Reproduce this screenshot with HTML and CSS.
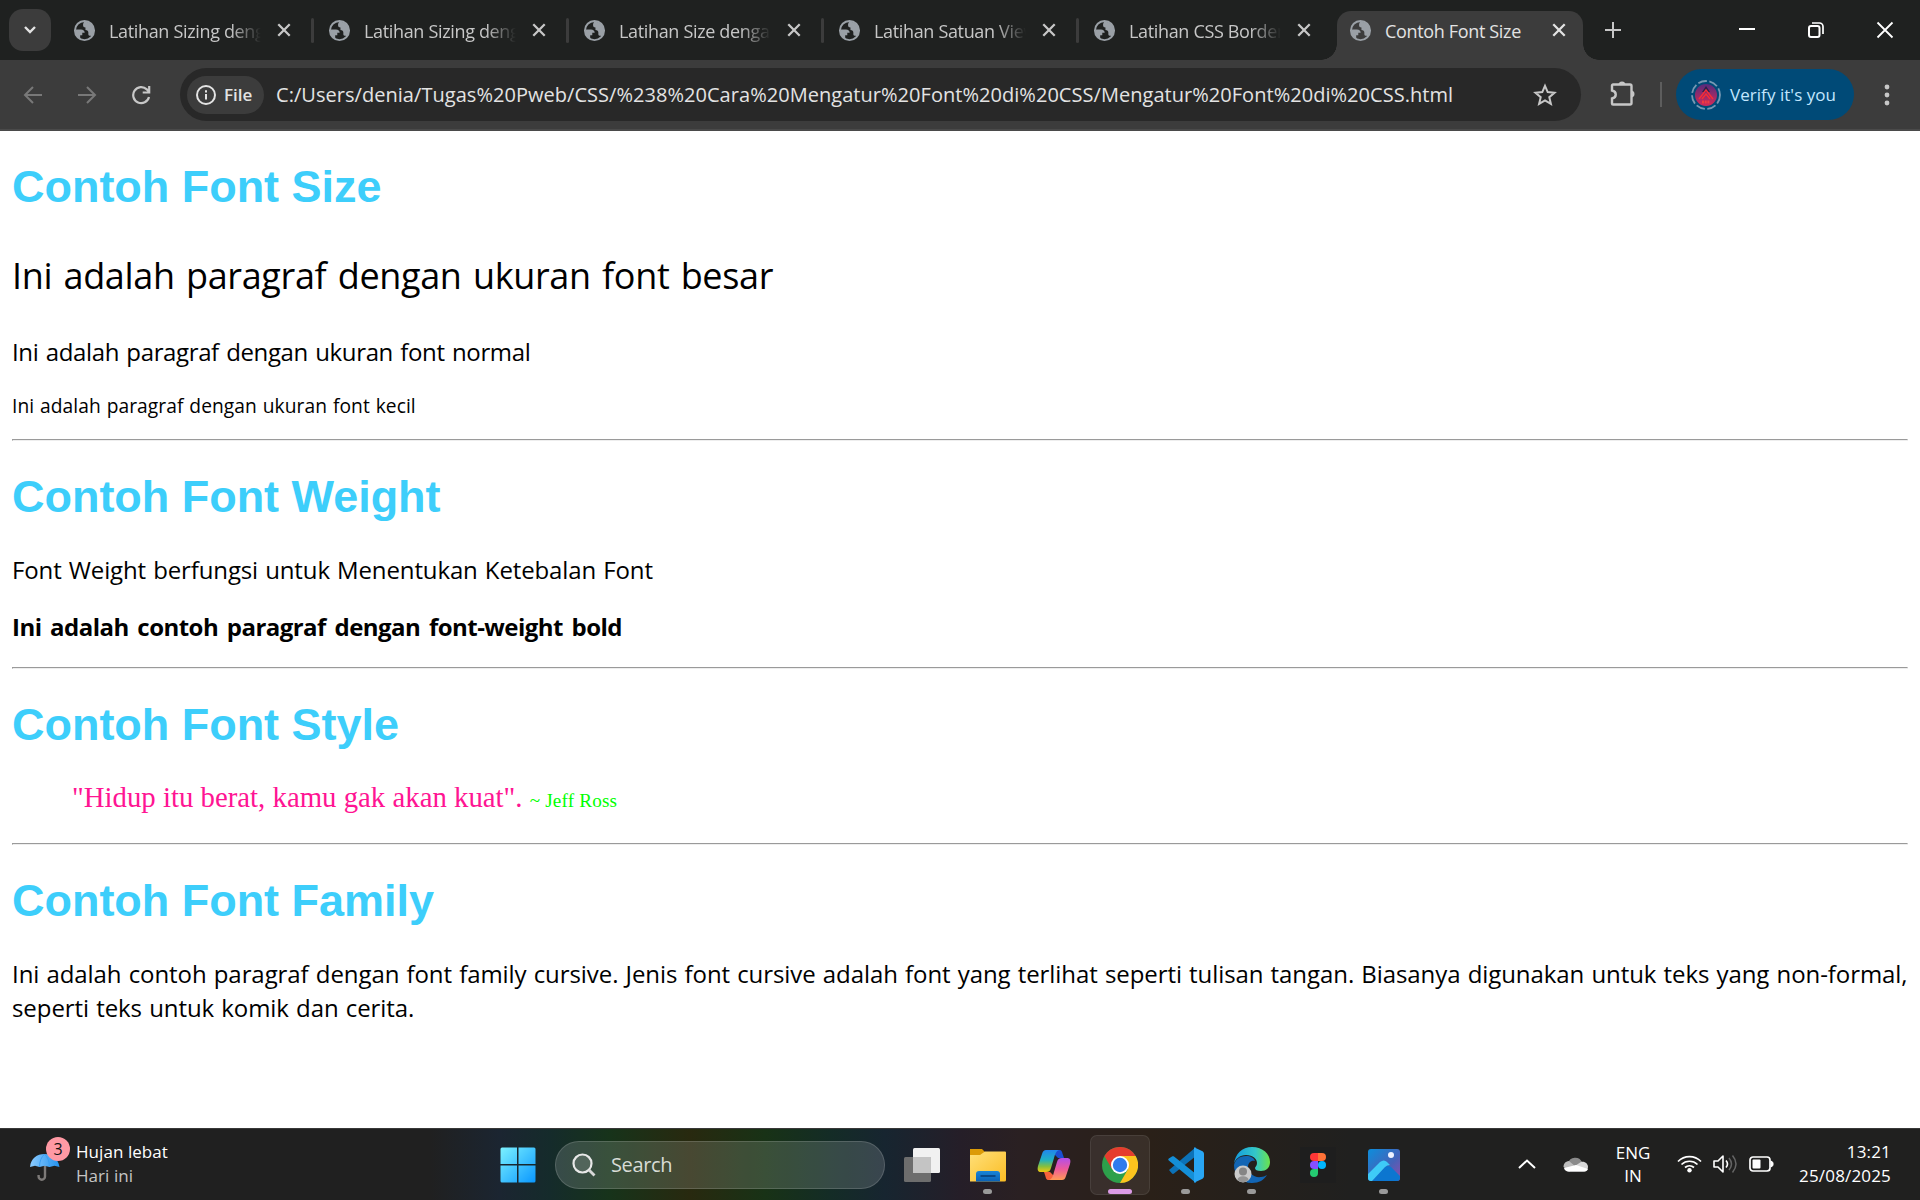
FILE: index.html
```html
<!DOCTYPE html>
<html lang="id">
<head>
<meta charset="utf-8">
<title>Contoh Font Size</title>
<link rel="stylesheet" href="styles.css">
</head>
<body>
<svg class="defs" width="0" height="0">
  <defs>
    <symbol id="globe" viewBox="0 0 24 24">
      <circle cx="12" cy="12" r="10" fill="none" stroke="#9aa0a6" stroke-width="2"/>
      <path fill="#9aa0a6" d="M12 2.500C10.600 4 10.500 5 10.500 6.500c0 1.500 1 2.300 2.500 2.300v2.700c2 0 3 1 3 2.500v1.800c0 1.200 1 1.700 2.300 1.700l1.700.5C21 16 22 14 22 12A10 10 0 0 0 12 2.500zM2.500 11h5.800c2.500 0 3.900 1.400 3.900 3.400h-2.500v2.500H7.500v3.700C4 18.500 2 15.500 2.500 11z"/>
    </symbol>
    <symbol id="close" viewBox="0 0 14 14"><path d="M2 2l10 10M12 2L2 12" stroke="currentColor" stroke-width="2" fill="none"/></symbol>
  </defs>
</svg>
<div class="screen">
  <header class="tabstrip">
    <div class="tab-search"><svg width="14" height="10" viewBox="0 0 14 10"><path d="M2 2l5 5 5-5" fill="none" stroke="#e3e3e3" stroke-width="2.400"/></svg></div>
    <div class="tab"><svg class="fav"><use href="#globe"/></svg><span class="tab-title">Latihan Sizing dengan</span><svg class="x"><use href="#close"/></svg></div>
    <div class="tab"><svg class="fav"><use href="#globe"/></svg><span class="tab-title">Latihan Sizing dengan</span><svg class="x"><use href="#close"/></svg></div>
    <div class="tab"><svg class="fav"><use href="#globe"/></svg><span class="tab-title">Latihan Size dengan</span><svg class="x"><use href="#close"/></svg></div>
    <div class="tab"><svg class="fav"><use href="#globe"/></svg><span class="tab-title">Latihan Satuan Viewport</span><svg class="x"><use href="#close"/></svg></div>
    <div class="tab last"><svg class="fav"><use href="#globe"/></svg><span class="tab-title">Latihan CSS Border</span><svg class="x"><use href="#close"/></svg></div>
    <div class="tab active"><svg class="fav"><use href="#globe"/></svg><span class="tab-title">Contoh Font Size</span><svg class="x"><use href="#close"/></svg></div>
    <svg class="newtab" viewBox="0 0 16 16"><path d="M8 0v16M0 8h16" stroke="#c7c7c7" stroke-width="2"/></svg>
    <div class="winctl">
      <svg viewBox="0 0 18 18"><path d="M1 8h16" stroke="#fff" stroke-width="2"/></svg>
      <svg viewBox="0 0 18 18"><rect x="2" y="5" width="10.500" height="11" rx="2" fill="none" stroke="#fff" stroke-width="2"/><path d="M5 2h7.500a3.500 3.500 0 0 1 3.500 3.500V13" fill="none" stroke="#fff" stroke-width="1.700"/></svg>
      <svg viewBox="0 0 18 18"><path d="M1.500 1.500l15 15M16.500 1.500l-15 15" stroke="#fff" stroke-width="1.800"/></svg>
    </div>
  </header>
  <div class="toolbar">
    <svg class="nav dim" viewBox="0 0 20 20"><path d="M19 10H2M10 2l-8 8 8 8" fill="none" stroke="currentColor" stroke-width="2"/></svg>
    <svg class="nav dim" viewBox="0 0 20 20"><path d="M1 10h17M10 2l8 8-8 8" fill="none" stroke="currentColor" stroke-width="2"/></svg>
    <svg class="nav" viewBox="0 0 20 20"><path d="M18 12a8 8 0 1 1-2.200-7.600L18 6.500M18.200 1v6.500h-6.500" fill="none" stroke="currentColor" stroke-width="2.200"/></svg>
    <div class="omnibox">
      <div class="chip"><svg width="20" height="20" viewBox="0 0 20 20"><circle cx="10" cy="10" r="9" fill="none" stroke="#e3e3e3" stroke-width="2"/><path d="M10 9v5.500M10 5.200v2.200" stroke="#e3e3e3" stroke-width="2"/></svg><span>File</span></div>
      <span class="url">C:/Users/denia/Tugas%20Pweb/CSS/%238%20Cara%20Mengatur%20Font%20di%20CSS/Mengatur%20Font%20di%20CSS.html</span>
      <svg class="star" viewBox="0 0 24 24"><path d="M12 2.800l2.700 6.300 6.800.6-5.200 4.500 1.600 6.700-5.900-3.600-5.900 3.600 1.600-6.700-5.200-4.500 6.800-.6z" fill="none" stroke="#c7c7c7" stroke-width="2"/></svg>
    </div>
    <svg class="ext" viewBox="0 0 26 26"><path d="M3 4.500h17a1.500 1.500 0 0 1 1.500 1.500v17a1.500 1.500 0 0 1-1.500 1.500H3a1 1 0 0 1-1-1v-5c5-1 5-7 0-8V5.500a1 1 0 0 1 1-1z" fill="none" stroke="#c7c7c7" stroke-width="2.400"/><path d="M8.500 5a3.500 3.500 0 0 1 7 0zM21 10.500a3.500 3.500 0 0 1 0 7z" fill="#c7c7c7"/></svg>
    <i class="divider"></i>
    <div class="verify">
      <svg width="30" height="30" viewBox="0 0 30 30"><defs><linearGradient id="av" x1="0" y1="0" x2="0" y2="1"><stop offset="0" stop-color="#552b7c"/><stop offset="1" stop-color="#d42a58"/></linearGradient></defs><circle cx="15" cy="15" r="14" fill="none" stroke="#7799b4" stroke-width="1.800" stroke-dasharray="9 2.500"/><circle cx="15" cy="15" r="11" fill="url(#av)"/><path d="M15 6l-4 6h8z" fill="#29204d"/><path d="M8 19l7-9 7 9M11 19l4-5 4 5" fill="none" stroke="#f52c37" stroke-width="1.500"/><path d="M11 22h8" stroke="#f03b41" stroke-width="3" stroke-dasharray="2 .7"/></svg>
      <span>Verify it's you</span>
    </div>
    <svg class="dots" viewBox="0 0 6 22"><g fill="#c7c7c7"><circle cx="3" cy="3" r="2.400"/><circle cx="3" cy="11" r="2.400"/><circle cx="3" cy="19" r="2.400"/></g></svg>
  </div>
  <main class="page">
    <h1>Contoh Font Size</h1>
    <p class="big">Ini adalah paragraf dengan ukuran font besar</p>
    <p class="normal">Ini adalah paragraf dengan ukuran font normal</p>
    <p class="small">Ini adalah paragraf dengan ukuran font kecil</p>
    <hr class="first">
    <h1>Contoh Font Weight</h1>
    <p class="weight">Font Weight berfungsi untuk Menentukan Ketebalan Font</p>
    <p class="bold">Ini adalah contoh paragraf dengan font-weight bold</p>
    <hr>
    <h1>Contoh Font Style</h1>
    <blockquote>"Hidup itu berat, kamu gak akan kuat". <span class="author">~ Jeff Ross</span></blockquote>
    <hr>
    <h1>Contoh Font Family</h1>
    <p class="family">Ini adalah contoh paragraf dengan font family cursive. Jenis font cursive adalah font yang terlihat seperti tulisan tangan. Biasanya digunakan untuk teks yang non-formal,<br>seperti teks untuk komik dan cerita.</p>
  </main>
  <footer class="taskbar">
    <div class="weather">
      <div class="umbrella"><svg width="30" height="30" viewBox="0 0 30 30"><defs><linearGradient id="um"><stop offset="0" stop-color="#8bcbff"/><stop offset="1" stop-color="#2392ee"/></linearGradient></defs><path d="M15 13v11.500a3.200 3.200 0 0 1-6.400 0V23" fill="none" stroke="#7d7a78" stroke-width="2.400"/><path d="M0 15C1 6 7 2 14.500 2S28 6 29.500 15l-5-1.200-5 1.200-5-1.200-5 1.200-4.500-1.200z" fill="url(#um)"/><path d="M9.500 15c0-6 2-10 5-13M19.500 15c0-6-2-10-5-13" stroke="#3b9ff2" fill="none"/></svg><b class="badge">3</b></div>
      <div class="wtext"><span>Hujan lebat</span><span class="sub">Hari ini</span></div>
    </div>
    <div class="center">
      <div class="slot"><svg width="36" height="36" viewBox="0 0 36 36"><defs><linearGradient id="win" gradientUnits="userSpaceOnUse" x1="0" y1="0" x2="36" y2="36"><stop offset="0" stop-color="#7df3ff"/><stop offset="1" stop-color="#0896ff"/></linearGradient></defs><path fill="url(#win)" d="M2 .500h15v16.500H.5V2A1.500 1.500 0 0 1 2 .5zM18.500.5H34A1.500 1.500 0 0 1 35.500 2v15h-17zM.5 18.500H17v17H2A1.500 1.500 0 0 1 .5 34zM18.500 18.500h17V34a1.500 1.500 0 0 1-1.500 1.500H18.500z"/></svg></div>
      <div class="search"><svg width="24" height="24" viewBox="0 0 24 24"><circle cx="10.500" cy="10.500" r="9" fill="#ffffff22" stroke="#e8e8e8" stroke-width="2.200"/><path d="M17 17l5.500 5.500" stroke="#d8d8d8" stroke-width="2.800"/></svg><span>Search</span></div>
      <div class="slot"><svg width="36" height="36" viewBox="0 0 36 36"><rect x="0" y="10" width="27" height="25" rx="1.500" fill="#6d6d6d"/><rect x="9" y="1" width="27" height="25" rx="1.500" fill="#f1f1f1"/><path d="M9 10h18v16H9z" fill="#c4c4c4"/></svg></div>
      <div class="slot run"><svg width="36" height="36" viewBox="0 0 36 36"><defs><linearGradient id="fo" x1="0" y1="0" x2="1" y2="1"><stop offset="0" stop-color="#ffe07a"/><stop offset="1" stop-color="#fbbd24"/></linearGradient><linearGradient id="fb" x1="0" y1="0" x2="0" y2="1"><stop offset="0" stop-color="#1985d8"/><stop offset="1" stop-color="#0a61b5"/></linearGradient></defs><path d="M0 2h12l3 3-3 4H0z" fill="#dc9b08"/><path d="M0 8h10l5-3.500h20A1 1 0 0 1 36 5.500V33a1.500 1.500 0 0 1-1.500 1.500H0z" fill="url(#fo)"/><path d="M6 34.500V27a3 3 0 0 1 3-3h18a3 3 0 0 1 3 3v7.500z" fill="url(#fb)"/><path d="M10.500 29h15" stroke="#083f78" stroke-width="1.600"/></svg></div>
      <div class="slot"><svg width="36" height="36" viewBox="0 0 36 36"><defs><linearGradient id="c1" x1="0" y1="0" x2="0" y2="1"><stop offset="0" stop-color="#2185ee"/><stop offset=".45" stop-color="#1fb1c2"/><stop offset=".75" stop-color="#87bf3e"/><stop offset="1" stop-color="#f3c70e"/></linearGradient><linearGradient id="c2" x1="0" y1="0" x2="0" y2="1"><stop offset="0" stop-color="#b34eea"/><stop offset=".5" stop-color="#ed599b"/><stop offset="1" stop-color="#ff9b55"/></linearGradient></defs><path d="M14 3h9c3 0 3 2 4 5l1 3h-6z" fill="#1b4fd2"/><path d="M22 33h-9c-3 0-3-2-4-5l-1-3h6z" fill="#f7623b"/><path d="M10 3h13c-3 1-4 4-5 8l-3 10c-1 3-2 4-5 4H5c-3 0-4-2-3-6L6 7c1-3 2-4 4-4z" fill="url(#c1)"/><path d="M26 33H13c3-1 4-4 5-8l3-10c1-3 2-4 5-4h5c3 0 4 2 3 6l-4 12c-1 3-2 4-4 4z" fill="url(#c2)"/></svg></div>
      <div class="slot run chrome"><svg width="36" height="36" viewBox="0 0 36 36"><circle cx="18" cy="18" r="18" fill="#2da04b"/><path d="M2.400 9A18 18 0 0 1 33.600 9H18l-7.800 13.500z" fill="#e53c2e"/><path d="M33.600 9A18 18 0 0 1 18 36l7.800-13.500L18 9z" fill="#fcc31e"/><circle cx="18" cy="18" r="9" fill="#fff"/><circle cx="18" cy="18" r="7.200" fill="#2f7bed"/></svg></div>
      <div class="slot run"><svg width="36" height="36" viewBox="0 0 36 36"><path d="M1 23l3 3.500c.6.500 1.300.5 2 0L28 9V0L1 23z" fill="#0c72b8"/><path d="M4 9.500c.6-.5 1.300-.5 2 0L28 27v9L.8 13.500c-.8-.7-.6-1.300 0-1.900z" fill="#148fd8"/><path d="M26 .300L34 4c1.300.6 2 1.500 2 3v22c0 1.500-.7 2.400-2 3l-8 3.700z" fill="#29a6f4"/></svg></div>
      <div class="slot run"><svg width="36" height="36" viewBox="0 0 36 36"><defs><linearGradient id="e1"><stop offset="0" stop-color="#129be0"/><stop offset=".6" stop-color="#34c7c8"/><stop offset="1" stop-color="#6be34b"/></linearGradient></defs><path d="M0 18c1-5 5-9 12-9 5 0 8 2 9 5-4-1-7 2-7 6 0 6 6 11 13 10 2 0 4-1 6-2-3 5-8 8-15 8C7 36 0 28 0 18z" fill="#1265b4"/><path d="M0 17C1 7 8 0 18 0c11 0 18 7 18 15 0 6-4 9-9 9-4 0-6-1-6-3 0-1 2-2 2-5 0-4-4-8-11-8C6 8 1 12 0 17z" fill="url(#e1)"/><circle cx="9" cy="27" r="8.500" fill="#cacaca"/><circle cx="9" cy="24.500" r="4" fill="#858585"/><path d="M3.500 33c0-5 11-5 11 0a8 8 0 0 1-11 0z" fill="#949494"/></svg></div>
      <div class="slot"><svg width="36" height="36" viewBox="0 0 36 36"><rect width="36" height="36" fill="#1e1e1e"/><path d="M18 6h-4a4 4 0 0 0 0 8h4z" fill="#ff3737"/><path d="M18 6h4a4 4 0 0 1 0 8h-4z" fill="#ff7237"/><path d="M18 14h-4a4 4 0 0 0 0 8h4z" fill="#874fff"/><circle cx="22" cy="18" r="4" fill="#00b6ff"/><path d="M18 22h-4a4 4 0 1 0 4 4z" fill="#24cb71"/></svg></div>
      <div class="slot run"><svg width="36" height="36" viewBox="0 0 36 36"><defs><linearGradient id="ph" x1="0" y1="0" x2="1" y2="1"><stop offset="0" stop-color="#0c8edc"/><stop offset=".6" stop-color="#4762b8"/><stop offset="1" stop-color="#914baa"/></linearGradient><clipPath id="pc"><rect x="2" y="2" width="32" height="32" rx="3"/></clipPath></defs><g clip-path="url(#pc)"><path d="M2 2h32v32H2z" fill="url(#ph)"/><path d="M6 34l13-14q3-2 6 0l9 9v5z" fill="#0c76d0"/><path d="M2 27l12-12q4-3 7 0l3 3q-3 0-5 2L6 34H2z" fill="#3ecbf7"/></g><circle cx="25" cy="8" r="3" fill="#eef2ff"/></svg></div>
    </div>
    <div class="tray">
      <svg width="18" height="10" viewBox="0 0 18 10"><path d="M1 9l8-7.500L17 9" fill="none" stroke="#fff" stroke-width="2"/></svg>
      <svg class="cloud" width="26" height="17" viewBox="0 0 26 17"><path d="M5 8a7.500 7.500 0 0 1 14-1l-6 5z" fill="#8b8b8b"/><path d="M13 12L6 6C2 6.500.5 9 .5 12l6 4.500z" fill="#bdbdbd"/><path d="M4 16L18 7c4-1 7 2 7 5 0 2.500-2 4.500-4.500 4.500H5z" fill="#d9d9d9"/><path d="M1 13l12-3 12 4c-1 2-2 2.500-4.500 2.500H5.500C3 16.500 1.500 15 1 13z" fill="#fff"/></svg>
      <div class="lang"><span>ENG</span><span>IN</span></div>
      <svg class="wifi" width="25" height="19" viewBox="0 0 25 19"><g fill="none" stroke="#fff" stroke-width="1.700"><path d="M1 7.500a16 16 0 0 1 23 0M4.500 10.500a11.500 11.500 0 0 1 16 0M8 13.500a6.800 6.800 0 0 1 9 0"/></g><circle cx="12.500" cy="16.300" r="2.200" fill="#fff"/></svg>
      <svg class="vol" width="25" height="20" viewBox="0 0 25 20"><path d="M1 7h4l5-5v16l-5-5H1z" fill="none" stroke="#fff" stroke-width="1.600" stroke-linejoin="round"/><path d="M13 6.500q3 3.500 0 7" fill="none" stroke="#fff" stroke-width="1.600"/><path d="M16 4q5 6 0 12M19.500 1.500q7 8.500 0 17" fill="none" stroke="#656565" stroke-width="1.500"/></svg>
      <svg class="bat" width="25" height="16" viewBox="0 0 25 16"><rect x="1" y="1" width="20" height="14" rx="3" fill="none" stroke="#fff" stroke-width="1.700"/><rect x="3.500" y="3.500" width="8" height="9" rx="1" fill="#fff"/><path d="M22 5l2 1.500v3L22 11z" fill="#fff" stroke="#fff"/></svg>
      <div class="clock"><span>13:21</span><span>25/08/2025</span></div>
    </div>
  </footer>
</div>
</body>
</html>
```
FILE: styles.css
```css
* { box-sizing: border-box; }
body { margin: 0; background: #fff; overflow: hidden; }
.defs { display: block; }
.screen { width: 1920px; height: 1200px; display: flex; flex-direction: column; font-family: "Segoe UI", "Open Sans", sans-serif; }
svg { flex: none; }

/* Tab strip */
.tabstrip { height: 60px; background: #1f2120; display: flex; align-items: center; flex: none; }
.tab-search { width: 42px; height: 42px; margin: 0 10px 0 9px; border-radius: 14px; background: #3c3c3c; display: grid; place-items: center; }
.tab { width: 255px; height: 49px; margin-top: 11px; padding: 0 24px 11px 12px; display: flex; align-items: center; color: #c7c7c7; position: relative; font-size: 18px; letter-spacing: -.34px; }
.tab::after { content: ""; position: absolute; right: 2px; top: 7px; width: 3px; height: 25px; border-radius: 2px; background: #3c3c3c; }
.tab.last::after, .tab.active::after { display: none; }
.fav { width: 23px; height: 23px; margin-right: 13px; }
.tab-title { flex: 1; overflow: hidden; white-space: nowrap; line-height: 28px; mask-image: linear-gradient(90deg, #000 80%, transparent 100%); padding-top: 2px; }
.x { width: 16px; height: 16px; margin-left: 15px; }
.active { background: #3c3c3c; color: #e3e3e3; width: 246px; border-radius: 14px 14px 0 0; padding-right: 16px; margin-left: 1px; }
.active .tab-title { mask-image: none; }
.active::before { content: ""; position: absolute; left: -16px; right: -16px; bottom: 0; height: 16px; background: radial-gradient(circle at 0 0, transparent 15.500px, #3c3c3c 16px) left / 16px 16px no-repeat, radial-gradient(circle at 100% 0, transparent 15.500px, #3c3c3c 16px) right / 16px 16px no-repeat; }
.newtab { width: 16px; height: 16px; margin-left: 22px; }
.winctl { display: flex; gap: 51px; margin-left: auto; padding-right: 26px; }
.winctl svg { width: 18px; height: 18px; }

/* Toolbar */
.toolbar { height: 71px; background: #3c3c3c; border-bottom: 2px solid #4a4a4a; display: flex; align-items: center; padding: 0 30px 0 23px; flex: none; }
.nav { width: 20px; height: 20px; margin-right: 34px; color: #c7c7c7; }
.dim { color: #787878; }
.omnibox { height: 53px; width: 1401px; background: #282828; border-radius: 27px; display: flex; align-items: center; padding: 0 24px 0 7px; margin-left: -5px; }
.chip { width: 77px; height: 38px; border-radius: 19px; background: #3c3c3c; display: flex; align-items: center; padding-left: 9px; gap: 8px; color: #e3e3e3; font-size: 17px; font-weight: 600; }
.url { margin-left: 12px; font-size: 20px; letter-spacing: .04px; color: #e3e3e3; white-space: nowrap; }
.star { width: 24px; height: 24px; margin-left: auto; }
.ext { width: 26px; height: 30px; margin: -3px 0 0 29px; }
.divider { width: 2px; height: 25px; background: #5d5d5d; margin-left: 24px; }
.verify { width: 178px; height: 51px; border-radius: 26px; background: #004a77; color: #c2e7ff; display: flex; align-items: center; gap: 9px; padding-left: 15px; margin-left: 14px; font-size: 17px; letter-spacing: .05px; white-space: nowrap; }
.dots { width: 6px; height: 22px; margin-left: auto; }

/* Document */
.page { flex: 1; padding: 0 12px; color: #000; display: flow-root; font-family: "Comic Sans MS", "Open Sans", cursive; font-size: 24px; line-height: 1.393; white-space: nowrap; overflow: hidden; }
h1 { font: bold 45px/51.500px Arial, "Liberation Sans", sans-serif; letter-spacing: -.03px; color: #3dcefb; margin: 30px 0; }
.page p { margin: 1em 0; }
.page .big { font-size: 36px; letter-spacing: -.34px; word-spacing: 2.300px; padding-top: 2px; margin-bottom: 34px; }
.page .normal { letter-spacing: -.37px; word-spacing: 1.500px; }
.page .small { font-size: 19.200px; letter-spacing: .07px; word-spacing: .8px; padding-top: 1px; }
.page .weight { letter-spacing: -.12px; word-spacing: 1px; padding-top: 1px; margin-bottom: 23px; }
.page .bold { font-weight: bold; letter-spacing: -.54px; word-spacing: 3px; margin-top: 23px; }
.page .family { letter-spacing: -.07px; word-spacing: 1px; padding-top: 1px; }
hr { border: 1px solid #9a9a9a; border-color: #9a9a9a #eee #eee #9a9a9a; margin: 0; }
hr.first { margin-top: 19.200px; }
blockquote { font: 28.800px/33px "Times New Roman", "Liberation Serif", serif; color: #ff1493; margin: 30px 60px 26px; }
.author { font-size: 19.200px; letter-spacing: .15px; color: #0f0; }

/* Taskbar */
.taskbar { height: 72px; flex: none; border-top: 1px solid #383838; display: flex; align-items: center; color: #fff; background: linear-gradient(90deg, #202020 430px, #1b2531 500px, #152b2b 550px, #17331a 610px, #28290f 690px, #183216 765px, #142c26 830px, #172530 885px, #251e28 960px, #2a2022 1020px, #2a2018 1150px, #20201f 1350px); }
.weather { width: 485px; display: flex; align-items: center; padding: 0 0 2px 30px; }
.umbrella { position: relative; width: 46px; height: 30px; padding-top: 3px; }
.badge { position: absolute; left: 16px; top: -12px; width: 24px; height: 24px; border-radius: 50%; background: #ff99a4; color: #111; font: 16px/24px "Open Sans", sans-serif; text-align: center; }
.wtext, .lang, .clock { display: flex; flex-direction: column; align-items: flex-start; font-size: 17px; line-height: 24px; }
.wtext { letter-spacing: .06px; }
.sub { color: #c5c5c5; }
.center { display: flex; align-items: center; }
.slot { width: 66px; height: 60px; display: grid; place-items: center; position: relative; border-radius: 7px; }
.run::after { content: ""; position: absolute; bottom: 1px; left: 28px; width: 9px; height: 5px; border-radius: 3px; background: #9a9a9a; }
.chrome { width: 60px; margin: 0 3px; background: #ffffff12; border: 1px solid #ffffff14; }
.chrome::after { width: 24px; left: 17px; bottom: 0; background: #dc9be6; }
.search { width: 330px; height: 48px; margin: 0 4px; border-radius: 24px; background: #ffffff26; border: 1px solid #ffffff26; display: flex; align-items: center; gap: 15px; padding-left: 16px; font-size: 20px; letter-spacing: -.38px; color: #d8dcd6; }
.tray { display: flex; align-items: center; margin-left: auto; padding: 0 29px 2px 0; }
.cloud { margin-left: 27px; }
.lang { width: 36px; align-items: center; margin-left: 26px; line-height: 23px; }
.wifi { margin-left: 26px; }
.vol { margin-left: 11px; }
.bat { margin-left: 11px; }
.clock { width: 94px; align-items: flex-end; margin-left: 23px; letter-spacing: .17px; }
```
